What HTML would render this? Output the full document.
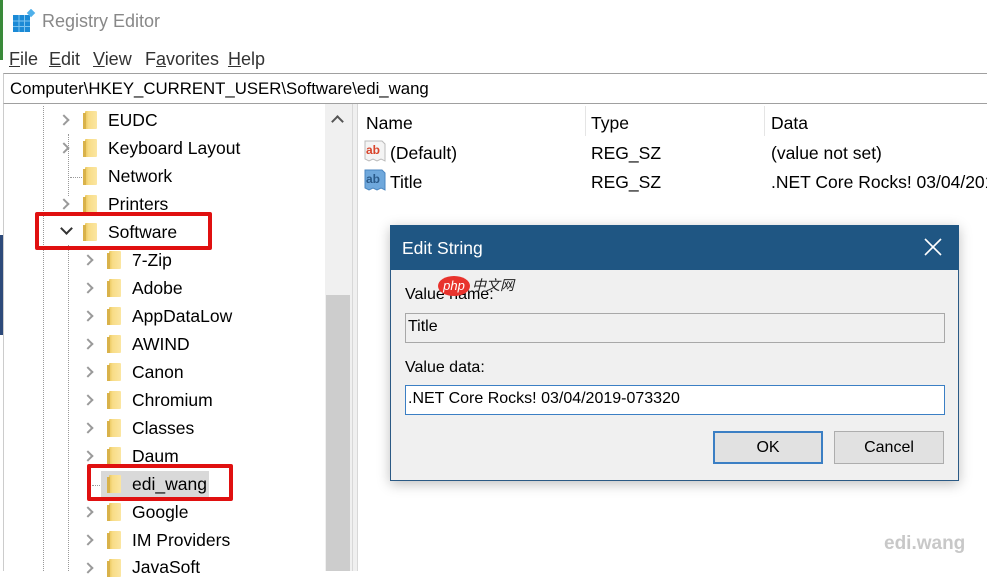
<!DOCTYPE html>
<html><head><meta charset="utf-8"><style>
*{margin:0;padding:0;box-sizing:border-box}
body{width:987px;height:571px;overflow:hidden;background:#fff;font-family:"Liberation Sans",sans-serif;position:relative;color:#000}
.a{position:absolute}
.row{position:absolute;font-size:17.5px;line-height:20px;white-space:nowrap}
.chev{position:absolute;width:8px;height:8px;border-right:2px solid #9a9a9a;border-top:2px solid #9a9a9a;transform:rotate(45deg)}
.fold{position:absolute;width:12px;height:18px;background:linear-gradient(90deg,#e9c65b 0,#f8dc86 30%,#fbe6a2 100%);border-radius:1px}
.fold:before{content:"";position:absolute;left:-2px;top:2px;width:3px;height:16px;background:#d9b24a}
.mi{position:absolute;top:49px;font-size:18px;color:#333}
</style></head><body>
<div class="a" style="left:0;top:0;width:3px;height:60px;background:#3a8a3a"></div>
<div class="a" style="left:0;top:235px;width:3px;height:100px;background:#2d4a7a"></div>
<svg class="a" style="left:12px;top:9px" width="24" height="24"><rect x="1" y="6" width="17" height="17" fill="#1b8ad6"/><g stroke="#7cc4f0" stroke-width="1"><line x1="7" y1="6" x2="7" y2="23"/><line x1="12.5" y1="6" x2="12.5" y2="23"/><line x1="1" y1="12" x2="18" y2="12"/><line x1="1" y1="17.5" x2="18" y2="17.5"/></g><rect x="16" y="1" width="6" height="6" fill="#4fb0ea" transform="rotate(45 19 4)"/></svg>
<div class="a" style="left:42px;top:11px;font-size:18px;color:#888">Registry Editor</div>
<div class="mi" style="left:9px"><u>F</u>ile</div>
<div class="mi" style="left:49px"><u>E</u>dit</div>
<div class="mi" style="left:93px"><u>V</u>iew</div>
<div class="mi" style="left:145px">F<u>a</u>vorites</div>
<div class="mi" style="left:228px"><u>H</u>elp</div>
<div class="a" style="left:3px;top:73px;width:984px;height:31px;border-top:1px solid #a0a0a0;border-bottom:1px solid #a0a0a0;border-left:1px solid #ccc"></div>
<div class="a" style="left:10px;top:79px;font-size:16.8px">Computer\HKEY_CURRENT_USER\Software\edi_wang</div>
<div class="a" style="left:3px;top:104px;width:1px;height:467px;background:#ccc"></div>
<div class="a" style="left:43px;top:106px;height:465px;border-left:1px dotted #999"></div>
<div class="a" style="left:68px;top:134px;height:62px;border-left:1px dotted #999"></div>
<div class="a" style="left:68px;top:245px;height:326px;border-left:1px dotted #999"></div>
<div class="a" style="left:70px;top:177px;width:12px;border-top:1px dotted #999"></div>
<div class="a" style="left:92px;top:485px;width:14px;border-top:1px dotted #999"></div>
<div class="a" style="left:325px;top:104px;width:27px;height:467px;background:#f0f0f0"></div>
<div class="a" style="left:326px;top:295px;width:24px;height:276px;background:#cdcdcd"></div>
<div class="a" style="left:333px;top:117px;width:9px;height:9px;border-left:2px solid #555;border-top:2px solid #555;transform:rotate(45deg)"></div>
<div class="a" style="left:352px;top:104px;width:6px;height:467px;background:#f0f0f0;border-left:1px solid #d8d8d8;border-right:1px solid #d8d8d8"></div>
<div class="a" style="left:101px;top:471px;width:108px;height:27px;background:#d9d9d9"></div>
<div class="chev" style="left:60px;top:116px"></div><div class="fold" style="left:85px;top:111px"></div><div class="row" style="left:108px;top:110px">EUDC</div>
<div class="chev" style="left:60px;top:144px"></div><div class="fold" style="left:85px;top:139px"></div><div class="row" style="left:108px;top:138px">Keyboard Layout</div>
<div class="fold" style="left:85px;top:167px"></div><div class="row" style="left:108px;top:166px">Network</div>
<div class="chev" style="left:60px;top:200px"></div><div class="fold" style="left:85px;top:195px"></div><div class="row" style="left:108px;top:194px">Printers</div>
<div class="a" style="left:62px;top:224px;width:9px;height:9px;border-right:2px solid #333;border-bottom:2px solid #333;transform:rotate(45deg)"></div>
<div class="fold" style="left:85px;top:223px"></div><div class="row" style="left:108px;top:222px">Software</div>
<div class="chev" style="left:84px;top:256px"></div><div class="fold" style="left:109px;top:251px"></div><div class="row" style="left:132px;top:250px">7-Zip</div>
<div class="chev" style="left:84px;top:284px"></div><div class="fold" style="left:109px;top:279px"></div><div class="row" style="left:132px;top:278px">Adobe</div>
<div class="chev" style="left:84px;top:312px"></div><div class="fold" style="left:109px;top:307px"></div><div class="row" style="left:132px;top:306px">AppDataLow</div>
<div class="chev" style="left:84px;top:340px"></div><div class="fold" style="left:109px;top:335px"></div><div class="row" style="left:132px;top:334px">AWIND</div>
<div class="chev" style="left:84px;top:368px"></div><div class="fold" style="left:109px;top:363px"></div><div class="row" style="left:132px;top:362px">Canon</div>
<div class="chev" style="left:84px;top:396px"></div><div class="fold" style="left:109px;top:391px"></div><div class="row" style="left:132px;top:390px">Chromium</div>
<div class="chev" style="left:84px;top:424px"></div><div class="fold" style="left:109px;top:419px"></div><div class="row" style="left:132px;top:418px">Classes</div>
<div class="chev" style="left:84px;top:452px"></div><div class="fold" style="left:109px;top:447px"></div><div class="row" style="left:132px;top:446px">Daum</div>
<div class="fold" style="left:109px;top:475px"></div><div class="row" style="left:132px;top:474px">edi_wang</div>
<div class="chev" style="left:84px;top:508px"></div><div class="fold" style="left:109px;top:503px"></div><div class="row" style="left:132px;top:502px">Google</div>
<div class="chev" style="left:84px;top:536px"></div><div class="fold" style="left:109px;top:531px"></div><div class="row" style="left:132px;top:530px">IM Providers</div>
<div class="chev" style="left:84px;top:564px"></div><div class="fold" style="left:109px;top:559px"></div><div class="row" style="left:132px;top:557px">JavaSoft</div>
<div class="a" style="left:35px;top:212px;width:177px;height:38px;border:4px solid #e01010;border-radius:2px"></div>
<div class="a" style="left:87px;top:464px;width:146px;height:37px;border:4px solid #e01010;border-radius:2px"></div>
<div class="a" style="left:585px;top:106px;width:1px;height:30px;background:#e5e5e5"></div>
<div class="a" style="left:764px;top:106px;width:1px;height:30px;background:#e5e5e5"></div>
<div class="row" style="left:366px;top:113px">Name</div>
<div class="row" style="left:591px;top:113px">Type</div>
<div class="row" style="left:771px;top:113px">Data</div>
<svg class="a" style="left:363px;top:139px" width="25" height="24"><path d="M2 2h17l3 3v17l-4-2-4 2-4-2-4 2-4-2z" fill="#f4f4f4" stroke="#bbb"/><text x="3" y="15" font-family="Liberation Sans" font-weight="bold" font-size="12" fill="#d9442b">ab</text></svg>
<svg class="a" style="left:363px;top:168px" width="25" height="24"><path d="M2 2h17l3 3v17l-4-2-4 2-4-2-4 2-4-2z" fill="#6fa8dc" stroke="#4a86c0"/><text x="3" y="15" font-family="Liberation Sans" font-weight="bold" font-size="12" fill="#2a5a8a">ab</text></svg>
<div class="row" style="left:390px;top:143px">(Default)</div>
<div class="row" style="left:591px;top:143px">REG_SZ</div>
<div class="row" style="left:771px;top:143px">(value not set)</div>
<div class="row" style="left:390px;top:172px">Title</div>
<div class="row" style="left:591px;top:172px">REG_SZ</div>
<div class="row" style="left:771px;top:172px">.NET Core Rocks! 03/04/2019</div>
<div class="a" style="left:390px;top:225px;width:569px;height:256px;background:#f0f0f0;border:1px solid #2b5a85;box-shadow:0 3px 12px rgba(0,0,0,.25)"></div>
<div class="a" style="left:390px;top:225px;width:569px;height:45px;background:#1f5683"></div>
<div class="a" style="left:402px;top:238px;font-size:17.5px;color:#fff">Edit String</div>
<svg class="a" style="left:924px;top:238px" width="18" height="18"><path d="M1 1L17 17M17 1L1 17" stroke="#fff" stroke-width="1.6"/></svg>
<div class="a" style="left:405px;top:286px;font-size:16px">Value name:</div>
<div class="a" style="left:438px;top:276px;width:32px;height:20px;background:#e8332d;border-radius:50%;color:#fff;font-size:13px;font-style:italic;text-align:center;line-height:20px">php</div>
<div class="a" style="left:472px;top:275px;font-size:14px;font-style:italic;color:#222;font-family:'Noto Sans CJK SC',sans-serif">中文网</div>
<div class="a" style="left:405px;top:313px;width:540px;height:30px;border:1px solid #a8a8a8;background:#f0f0f0"></div>
<div class="a" style="left:408px;top:318px;font-size:16px">Title</div>
<div class="a" style="left:405px;top:359px;font-size:16px">Value data:</div>
<div class="a" style="left:405px;top:385px;width:540px;height:30px;border:1px solid #3b7fc4;background:#fff"></div>
<div class="a" style="left:408px;top:390px;font-size:16px">.NET Core Rocks! 03/04/2019-073320</div>
<div class="a" style="left:713px;top:431px;width:110px;height:33px;border:2px solid #3b7fc4;background:#e1e1e1;font-size:16px;text-align:center;line-height:29px">OK</div>
<div class="a" style="left:834px;top:431px;width:110px;height:33px;border:1px solid #adadad;background:#e1e1e1;font-size:16px;text-align:center;line-height:31px">Cancel</div>
<div class="a" style="left:884px;top:533px;font-size:19px;font-weight:bold;color:#c8c8c8">edi.wang</div>
</body></html>
